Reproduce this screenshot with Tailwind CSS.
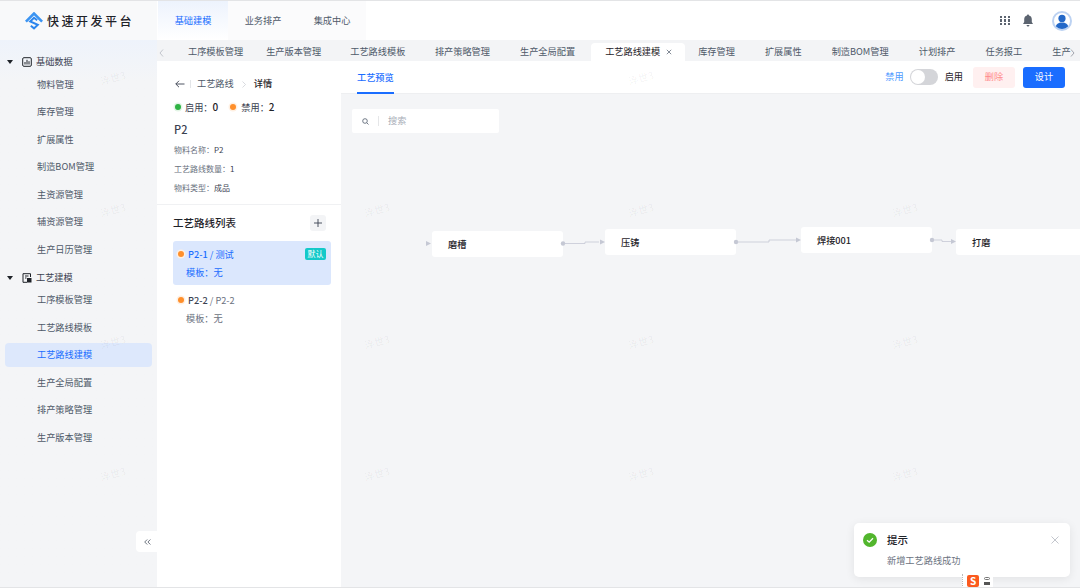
<!DOCTYPE html>
<html lang="zh-CN">
<head>
    <meta charset="UTF-8">
    <title>快速开发平台</title>
    <script src="https://cdn.jsdelivr.net/npm/@tailwindcss/browser@4"></script>
</head>
<body class="bg-white">
<div class="relative w-[1080px] h-[588px] overflow-hidden flex flex-col border-t border-b border-[#e3e4e6] text-[#4e5969] text-[9.2px] font-['Noto_Sans_CJK_SC','Noto_Sans',sans-serif]">

    <!-- Top bar -->
    <header class="h-[39px] flex shrink-0 bg-white">
        <div class="w-[157px] shrink-0 bg-[#f8f9fa] flex items-center pl-[25px]">
            <svg class="w-[18px] h-[18px]" viewBox="0 0 18 18" fill="none">
                <path d="M0.9 9.6 L9 1.5 L17.1 9.6" stroke="#3b94f2" stroke-width="2.6"/>
                <path d="M12.2 8.2 L9 5.8 L5.2 9.4 L12.8 12.8 L9 16.4 L5.8 13.8" stroke="#2c86ee" stroke-width="2"/>
            </svg>
            <span class="ml-[4px] text-[12px] font-medium tracking-[2.5px] text-[#1f2329] whitespace-nowrap">快速开发平台</span>
        </div>
        <nav class="flex h-full">
            <a class="w-[70px] ml-px flex items-center justify-center text-[#1a6dff] bg-gradient-to-b from-[#edf3fd] to-white">基础建模</a>
            <a class="w-[70px] flex items-center justify-center bg-[#fbfbfc]">业务排产</a>
            <a class="w-[68px] flex items-center justify-center bg-[#fbfbfc]">集成中心</a>
        </nav>
        <div class="ml-auto flex items-center pr-[8px]">
            <div class="grid grid-cols-3 gap-[1.5px] w-[10px] mr-[12px]">
                <i class="w-[2.3px] h-[2.3px] bg-[#5c6470]"></i><i class="w-[2.3px] h-[2.3px] bg-[#5c6470]"></i><i class="w-[2.3px] h-[2.3px] bg-[#5c6470]"></i>
                <i class="w-[2.3px] h-[2.3px] bg-[#5c6470]"></i><i class="w-[2.3px] h-[2.3px] bg-[#5c6470]"></i><i class="w-[2.3px] h-[2.3px] bg-[#5c6470]"></i>
                <i class="w-[2.3px] h-[2.3px] bg-[#5c6470]"></i><i class="w-[2.3px] h-[2.3px] bg-[#5c6470]"></i><i class="w-[2.3px] h-[2.3px] bg-[#5c6470]"></i>
            </div>
            <svg class="w-[12px] h-[13px] mr-[18px]" viewBox="0 0 12 13" fill="#5c6470">
                <path d="M6 0.5 C6.6 0.5 7 0.9 7 1.5 C8.8 2 9.8 3.4 9.8 5.2 V8 L11 10 H1 L2.2 8 V5.2 C2.2 3.4 3.2 2 5 1.5 C5 0.9 5.4 0.5 6 0.5 Z"/>
                <path d="M4.5 11 H7.5 C7.4 11.9 6.8 12.5 6 12.5 C5.2 12.5 4.6 11.9 4.5 11 Z"/>
            </svg>
            <div class="w-[20px] h-[20px] rounded-full bg-white border-2 border-[#bcd2f2] overflow-hidden">
                <svg class="w-full h-full" viewBox="0 0 16 16" fill="#2368c8">
                    <circle cx="8" cy="5.4" r="3.6"/>
                    <path d="M1.5 15 C1.8 11.2 4.5 9.6 8 9.6 C11.5 9.6 14.2 11.2 14.5 15 C11 16.4 5 16.4 1.5 15 Z"/>
                </svg>
            </div>
        </div>
    </header>

    <div class="flex-1 flex min-h-0">
        <!-- Sidebar -->
        <aside class="w-[157px] shrink-0 bg-gradient-to-b from-[#eef3fb] via-[#f4f5f7] via-[40px] to-[#f4f5f7] px-[5px] pt-[11px]">
            <div class="h-[21.5px] flex items-center pl-[2px] text-[#3a4150]">
                <i class="w-0 h-0 border-x-[3px] border-x-transparent border-t-[4px] border-t-[#1f2329]"></i>
                <svg class="ml-[9px] w-[10px] h-[10px]" viewBox="0 0 10 10" fill="none" stroke="#1f2329"><rect x="0.7" y="0.7" width="8.6" height="8.6" rx="1.2"/><path d="M3 7.5V5M5 7.5V2.8M7 7.5V4.2"/></svg>
                <span class="ml-[4px]">基础数据</span>
            </div>
            <ul class="mb-[6px]">
                <li class="h-[24px] mb-[3.5px] flex items-center pl-[32px]">物料管理</li>
                <li class="h-[24px] mb-[3.5px] flex items-center pl-[32px]">库存管理</li>
                <li class="h-[24px] mb-[3.5px] flex items-center pl-[32px]">扩展属性</li>
                <li class="h-[24px] mb-[3.5px] flex items-center pl-[32px]">制造BOM管理</li>
                <li class="h-[24px] mb-[3.5px] flex items-center pl-[32px]">主资源管理</li>
                <li class="h-[24px] mb-[3.5px] flex items-center pl-[32px]">辅资源管理</li>
                <li class="h-[24px] mb-[3.5px] flex items-center pl-[32px]">生产日历管理</li>
            </ul>
            <div class="h-[20.5px] flex items-center pl-[2px] text-[#3a4150]">
                <i class="w-0 h-0 border-x-[3px] border-x-transparent border-t-[4px] border-t-[#1f2329]"></i>
                <svg class="ml-[9px] w-[10px] h-[10px]" viewBox="0 0 10 10" fill="none" stroke="#1f2329"><path d="M5 9.3H1V0.7H8.5V4"/><path d="M3 3H6.5M3 5H4.5" /><rect x="5.5" y="5.5" width="3.5" height="3.5" fill="#1f2329"/></svg>
                <span class="ml-[4px]">工艺建模</span>
            </div>
            <ul>
                <li class="h-[24px] mb-[3.5px] flex items-center pl-[32px]">工序模板管理</li>
                <li class="h-[24px] mb-[3.5px] flex items-center pl-[32px]">工艺路线模板</li>
                <li class="h-[24px] mb-[3.5px] flex items-center pl-[32px] rounded-[4px] bg-[#dde8fc] text-[#1a6dff]">工艺路线建模</li>
                <li class="h-[24px] mb-[3.5px] flex items-center pl-[32px]">生产全局配置</li>
                <li class="h-[24px] mb-[3.5px] flex items-center pl-[32px]">排产策略管理</li>
                <li class="h-[24px] mb-[3.5px] flex items-center pl-[32px]">生产版本管理</li>
            </ul>
        </aside>

        <div class="flex-1 min-w-0 flex flex-col">
            <!-- Open tabs -->
            <div class="relative h-[21px] shrink-0 bg-[#f3f4f6] flex items-end overflow-hidden whitespace-nowrap pl-[31px]">
                <span class="shrink-0 h-[18px] flex items-center mr-[-7px]">工序模板管理</span>
                <span class="shrink-0 h-[18px] flex items-center ml-[30px]">生产版本管理</span>
                <span class="shrink-0 h-[18px] flex items-center ml-[29px]">工艺路线模板</span>
                <span class="shrink-0 h-[18px] flex items-center ml-[29.5px]">排产策略管理</span>
                <span class="shrink-0 h-[18px] flex items-center ml-[30px]">生产全局配置</span>
                <span class="shrink-0 h-[18px] flex items-center ml-[16px] pl-[14px] w-[94px] bg-white rounded-t-[4px] text-[#1f2329]">工艺路线建模<svg class="ml-[6px] w-[6px] h-[6px]" viewBox="0 0 6 6" stroke="#4e5969" stroke-width="0.7"><path d="M0.8 0.8L5.2 5.2M5.2 0.8L0.8 5.2"/></svg></span>
                <span class="shrink-0 h-[18px] flex items-center ml-[13px]">库存管理</span>
                <span class="shrink-0 h-[18px] flex items-center ml-[30px]">扩展属性</span>
                <span class="shrink-0 h-[18px] flex items-center ml-[30px]">制造BOM管理</span>
                <span class="shrink-0 h-[18px] flex items-center ml-[30px]">计划排产</span>
                <span class="shrink-0 h-[18px] flex items-center ml-[30px]">任务报工</span>
                <span class="shrink-0 h-[18px] flex items-center ml-[30px]">生产</span>
                <svg class="absolute left-[2px] top-[9px] w-[5px] h-[8px]" viewBox="0 0 5 8" fill="none" stroke="#b6bac2" stroke-width="0.8"><path d="M4 0.5L1 4L4 7.5"/></svg>
                <svg class="absolute right-[5px] top-[9px] w-[5px] h-[8px]" viewBox="0 0 5 8" fill="none" stroke="#8d929c" stroke-width="0.8"><path d="M1 0.5L4 4L1 7.5"/></svg>
            </div>

            <div class="flex-1 min-h-0 flex">
                <!-- Detail panel -->
                <section class="w-[184px] shrink-0 bg-white flex flex-col">
                    <div class="px-[17px] border-b border-[#f0f1f3] h-[144px]">
                        <div class="h-[14px] mt-[16px] flex items-center">
                            <svg class="ml-px w-[10px] h-[8px]" viewBox="0 0 10 8" fill="none" stroke="#3a4150" stroke-width="0.9"><path d="M0.8 4H9.5M4 0.8L0.8 4L4 7.2"/></svg>
                            <i class="ml-[5px] w-px h-[8px] bg-[#e3e5e8]"></i>
                            <span class="ml-[6px]">工艺路线</span>
                            <svg class="ml-[8px] w-[4px] h-[7px]" viewBox="0 0 4 7" fill="none" stroke="#c9ccd2" stroke-width="0.7"><path d="M0.5 0.5L3.5 3.5L0.5 6.5"/></svg>
                            <span class="ml-[8px] font-medium text-[#1f2329]">详情</span>
                        </div>
                        <div class="mt-[9px] h-[14px] flex items-center text-[#3a4150]">
                            <i class="ml-px w-[6px] h-[6px] rounded-full bg-[#2fb344] shadow-[0_0_0_1.5px_#e3f5e6]"></i>
                            <span class="ml-[4px]">启用：<b class="font-medium text-[#1f2329] text-[10px]">0</b></span>
                            <i class="ml-[12px] w-[6px] h-[6px] rounded-full bg-[#ff8f2b] shadow-[0_0_0_1.5px_#fff0e2]"></i>
                            <span class="ml-[5px]">禁用：<b class="font-medium text-[#1f2329] text-[10px]">2</b></span>
                        </div>
                        <div class="mt-[7px] h-[16px] leading-[16px] text-[11px] font-medium text-[#3a4150]">P2</div>
                        <div class="mt-[7px] h-[12px] leading-[12px] text-[8px] text-[#6b7280]">物料名称：<span class="text-[#3a4150]">P2</span></div>
                        <div class="mt-[7px] h-[12px] leading-[12px] text-[8px] text-[#6b7280]">工艺路线数量：<span class="text-[#3a4150]">1</span></div>
                        <div class="mt-[7px] h-[12px] leading-[12px] text-[8px] text-[#6b7280]">物料类型：<span class="text-[#3a4150]">成品</span></div>
                    </div>
                    <div class="pl-[16px] pr-[10px]">
                        <div class="mt-[10px] h-[16px] flex items-center justify-between pr-[5px]">
                            <h3 class="text-[10.5px] font-medium text-[#1f2329]">工艺路线列表</h3>
                            <button class="w-[16px] h-[16px] rounded-[3px] bg-[#f3f4f6] flex items-center justify-center">
                                <svg class="w-[8px] h-[8px]" viewBox="0 0 8 8" stroke="#3a4150" stroke-width="0.9"><path d="M4 0V8M0 4H8"/></svg>
                            </button>
                        </div>
                        <div class="relative mt-[10px] h-[44px] rounded-[3px] bg-[#dbe7fd] pl-[13px] text-[#1a6dff]">
                            <i class="absolute left-[5px] top-[10px] w-[6px] h-[6px] rounded-full bg-[#ff8f2b] shadow-[0_0_0_1.5px_#fff0e2]"></i>
                            <div class="pt-[7px] h-[24px] pl-[2px]"><b class="font-medium">P2-1</b> / 测试</div>
                            <div class="mt-[1px]">模板：无</div>
                            <span class="absolute right-[5px] top-[7px] w-[21px] h-[12px] rounded-[2px] bg-[#14c9c9] text-white text-[8px] leading-[12px] text-center">默认</span>
                        </div>
                        <div class="relative h-[44px] pl-[13px] text-[#6b7280] mt-[3px]">
                            <i class="absolute left-[5px] top-[9px] w-[6px] h-[6px] rounded-full bg-[#ff8f2b] shadow-[0_0_0_1.5px_#fff0e2]"></i>
                            <div class="pt-[6px] h-[23px] pl-[2px]"><b class="font-medium text-[#3a4150]">P2-2</b> / P2-2</div>
                            <div class="mt-[1px]">模板：无</div>
                        </div>
                    </div>
                </section>

                <!-- Preview -->
                <main class="flex-1 min-w-0 flex flex-col bg-[#f4f5f7]">
                    <div class="h-[33px] shrink-0 bg-white border-b border-[#eeeff1] flex items-center pl-[16px] pr-[15px]">
                        <span class="h-full flex items-center pt-[1px] font-medium text-[#1a6dff] border-b-2 border-[#1a6dff] translate-y-px">工艺预览</span>
                        <span class="ml-auto text-[#4f9bff]">禁用</span>
                        <span class="relative ml-[6px] w-[28px] h-[16px] rounded-full bg-[#d4d5d9]">
                            <i class="absolute left-px top-px w-[14px] h-[14px] rounded-full bg-white"></i>
                        </span>
                        <span class="ml-[7px] text-[#1f2329]">启用</span>
                        <button class="ml-[10px] w-[42px] h-[21px] rounded-[3px] bg-[#fff0f0] text-[#ff8a8a]">删除</button>
                        <button class="ml-[8px] w-[42px] h-[21px] rounded-[3px] bg-[#1a6dff] text-white">设计</button>
                    </div>
                    <div class="relative flex-1">
                        <div class="ml-[11px] mt-[15px] w-[147px] h-[24px] rounded-[2px] bg-white flex items-center pl-[10px] text-[#a9aeb8]">
                            <svg class="w-[7px] h-[7px]" viewBox="0 0 7 7" fill="none" stroke="#4e5969" stroke-width="0.8"><circle cx="3" cy="3" r="2.3"/><path d="M4.8 4.8L6.5 6.5"/></svg>
                            <i class="ml-[9px] w-px h-[10px] bg-[#e5e6e8]"></i>
                            <span class="ml-[9px]">搜索</span>
                        </div>

                        <!-- Route diagram, origin at x=341 y=94 -->
                        <div class="absolute left-[91px] top-[137px] w-[131px] h-[26px] pt-px rounded-[3px] bg-white flex items-center pl-[16px] font-medium text-[#1f2329]">磨槽</div>
                        <div class="absolute left-[264px] top-[135px] w-[131px] h-[26px] pt-px rounded-[3px] bg-white flex items-center pl-[16px] font-medium text-[#1f2329]">压铸</div>
                        <div class="absolute left-[460px] top-[133px] w-[131px] h-[26px] pt-px rounded-[3px] bg-white flex items-center pl-[16px] font-medium text-[#1f2329]">焊接001</div>
                        <div class="absolute left-[615px] top-[135px] w-[131px] h-[26px] pt-px rounded-[3px] bg-white flex items-center pl-[16px] font-medium text-[#1f2329]">打磨</div>
                        <svg class="absolute left-0 top-0 w-[739px] h-[200px] pointer-events-none" viewBox="0 0 739 200" fill="none">
                            <path d="M85 147 L90 149.5 L85 152 Z" fill="#c5c8d4"/>
                            <path d="M222 149.5 H244 V148 H258" stroke="#c5c8d4" stroke-width="0.8"/>
                            <circle cx="222" cy="149.5" r="2.2" fill="#c5c8d4"/>
                            <path d="M259 145.5 L264 148 L259 150.5 Z" fill="#c5c8d4"/>
                            <path d="M395 148 H428 V146 H455" stroke="#c5c8d4" stroke-width="0.8"/>
                            <circle cx="395" cy="148" r="2.2" fill="#c5c8d4"/>
                            <path d="M455 143.5 L460 146 L455 148.5 Z" fill="#c5c8d4"/>
                            <path d="M591 146 H601 V147.5 H610" stroke="#c5c8d4" stroke-width="0.8"/>
                            <circle cx="591" cy="146" r="2.2" fill="#c5c8d4"/>
                            <path d="M610 145 L615 147.5 L610 150 Z" fill="#c5c8d4"/>
                        </svg>
                    </div>
                </main>
            </div>
        </div>
    </div>

    <!-- Watermark -->
    <div class="absolute left-[-19px] top-[10px] grid grid-cols-[repeat(4,264px)] auto-rows-[132px] pointer-events-none text-black/[0.06] text-[10px]">
        <span class="flex items-center justify-center"><i class="not-italic -rotate-15">浮世3</i></span><span></span><span class="flex items-center justify-center"><i class="not-italic -rotate-15">浮世3</i></span><span></span>
        <span class="flex items-center justify-center"><i class="not-italic -rotate-15">浮世3</i></span><span class="flex items-center justify-center"><i class="not-italic -rotate-15">浮世3</i></span><span class="flex items-center justify-center"><i class="not-italic -rotate-15">浮世3</i></span><span class="flex items-center justify-center"><i class="not-italic -rotate-15">浮世3</i></span>
        <span class="flex items-center justify-center"><i class="not-italic -rotate-15">浮世3</i></span><span class="flex items-center justify-center"><i class="not-italic -rotate-15">浮世3</i></span><span class="flex items-center justify-center"><i class="not-italic -rotate-15">浮世3</i></span><span class="flex items-center justify-center"><i class="not-italic -rotate-15">浮世3</i></span>
        <span class="flex items-center justify-center"><i class="not-italic -rotate-15">浮世3</i></span><span class="flex items-center justify-center"><i class="not-italic -rotate-15">浮世3</i></span><span class="flex items-center justify-center"><i class="not-italic -rotate-15">浮世3</i></span><span class="flex items-center justify-center"><i class="not-italic -rotate-15">浮世3</i></span>
    </div>

    <!-- Sidebar collapse -->
    <button class="absolute left-[136px] top-[530px] w-[22px] h-[21px] rounded-l-[4px] bg-white flex items-center justify-center">
        <svg class="w-[7px] h-[6px]" viewBox="0 0 7 6" fill="none" stroke="#5c6470" stroke-width="0.9"><path d="M3.2 0.5L0.7 3L3.2 5.5M6.4 0.5L3.9 3L6.4 5.5"/></svg>
    </button>

    <!-- Toast -->
    <div class="absolute left-[854px] top-[522px] w-[216px] h-[54px] rounded-[5px] bg-white shadow-[0_2px_10px_rgba(0,0,0,0.08)]">
        <div class="flex items-center h-[14px] mt-[10px] ml-[9px]">
            <svg class="w-[14px] h-[14px]" viewBox="0 0 14 14"><circle cx="7" cy="7" r="7" fill="#52b62d"/><path d="M4 7.2L6.2 9.2L10 5.2" fill="none" stroke="#fff" stroke-width="1.3"/></svg>
            <span class="ml-[10px] text-[10.5px] font-medium text-[#1f2329]">提示</span>
            <svg class="ml-auto mr-[11px] w-[8px] h-[8px]" viewBox="0 0 8 8" stroke="#a9aeb8" stroke-width="0.7"><path d="M0.5 0.5L7.5 7.5M7.5 0.5L0.5 7.5"/></svg>
        </div>
        <p class="ml-[33px] mt-[6px] leading-[14px] text-[#6b7280]">新增工艺路线成功</p>
    </div>

    <!-- IME status -->
    <div class="absolute left-[962px] top-[573px] w-[31px] h-[14px] bg-white flex items-center border-l border-dotted border-[#bbb] pl-[4px]">
        <span class="w-[12px] h-[12px] rounded-[2px] bg-[#fb5a1e] text-white text-[10px] leading-[12px] font-bold text-center">S</span>
        <span class="ml-[5px] grid grid-cols-1 gap-[2px]"><i class="w-[6px] h-[3.5px] rounded-full border border-[#777]"></i><i class="w-[6px] h-[3px] bg-[#555]"></i></span>
    </div>
</div>
</body>
</html>
